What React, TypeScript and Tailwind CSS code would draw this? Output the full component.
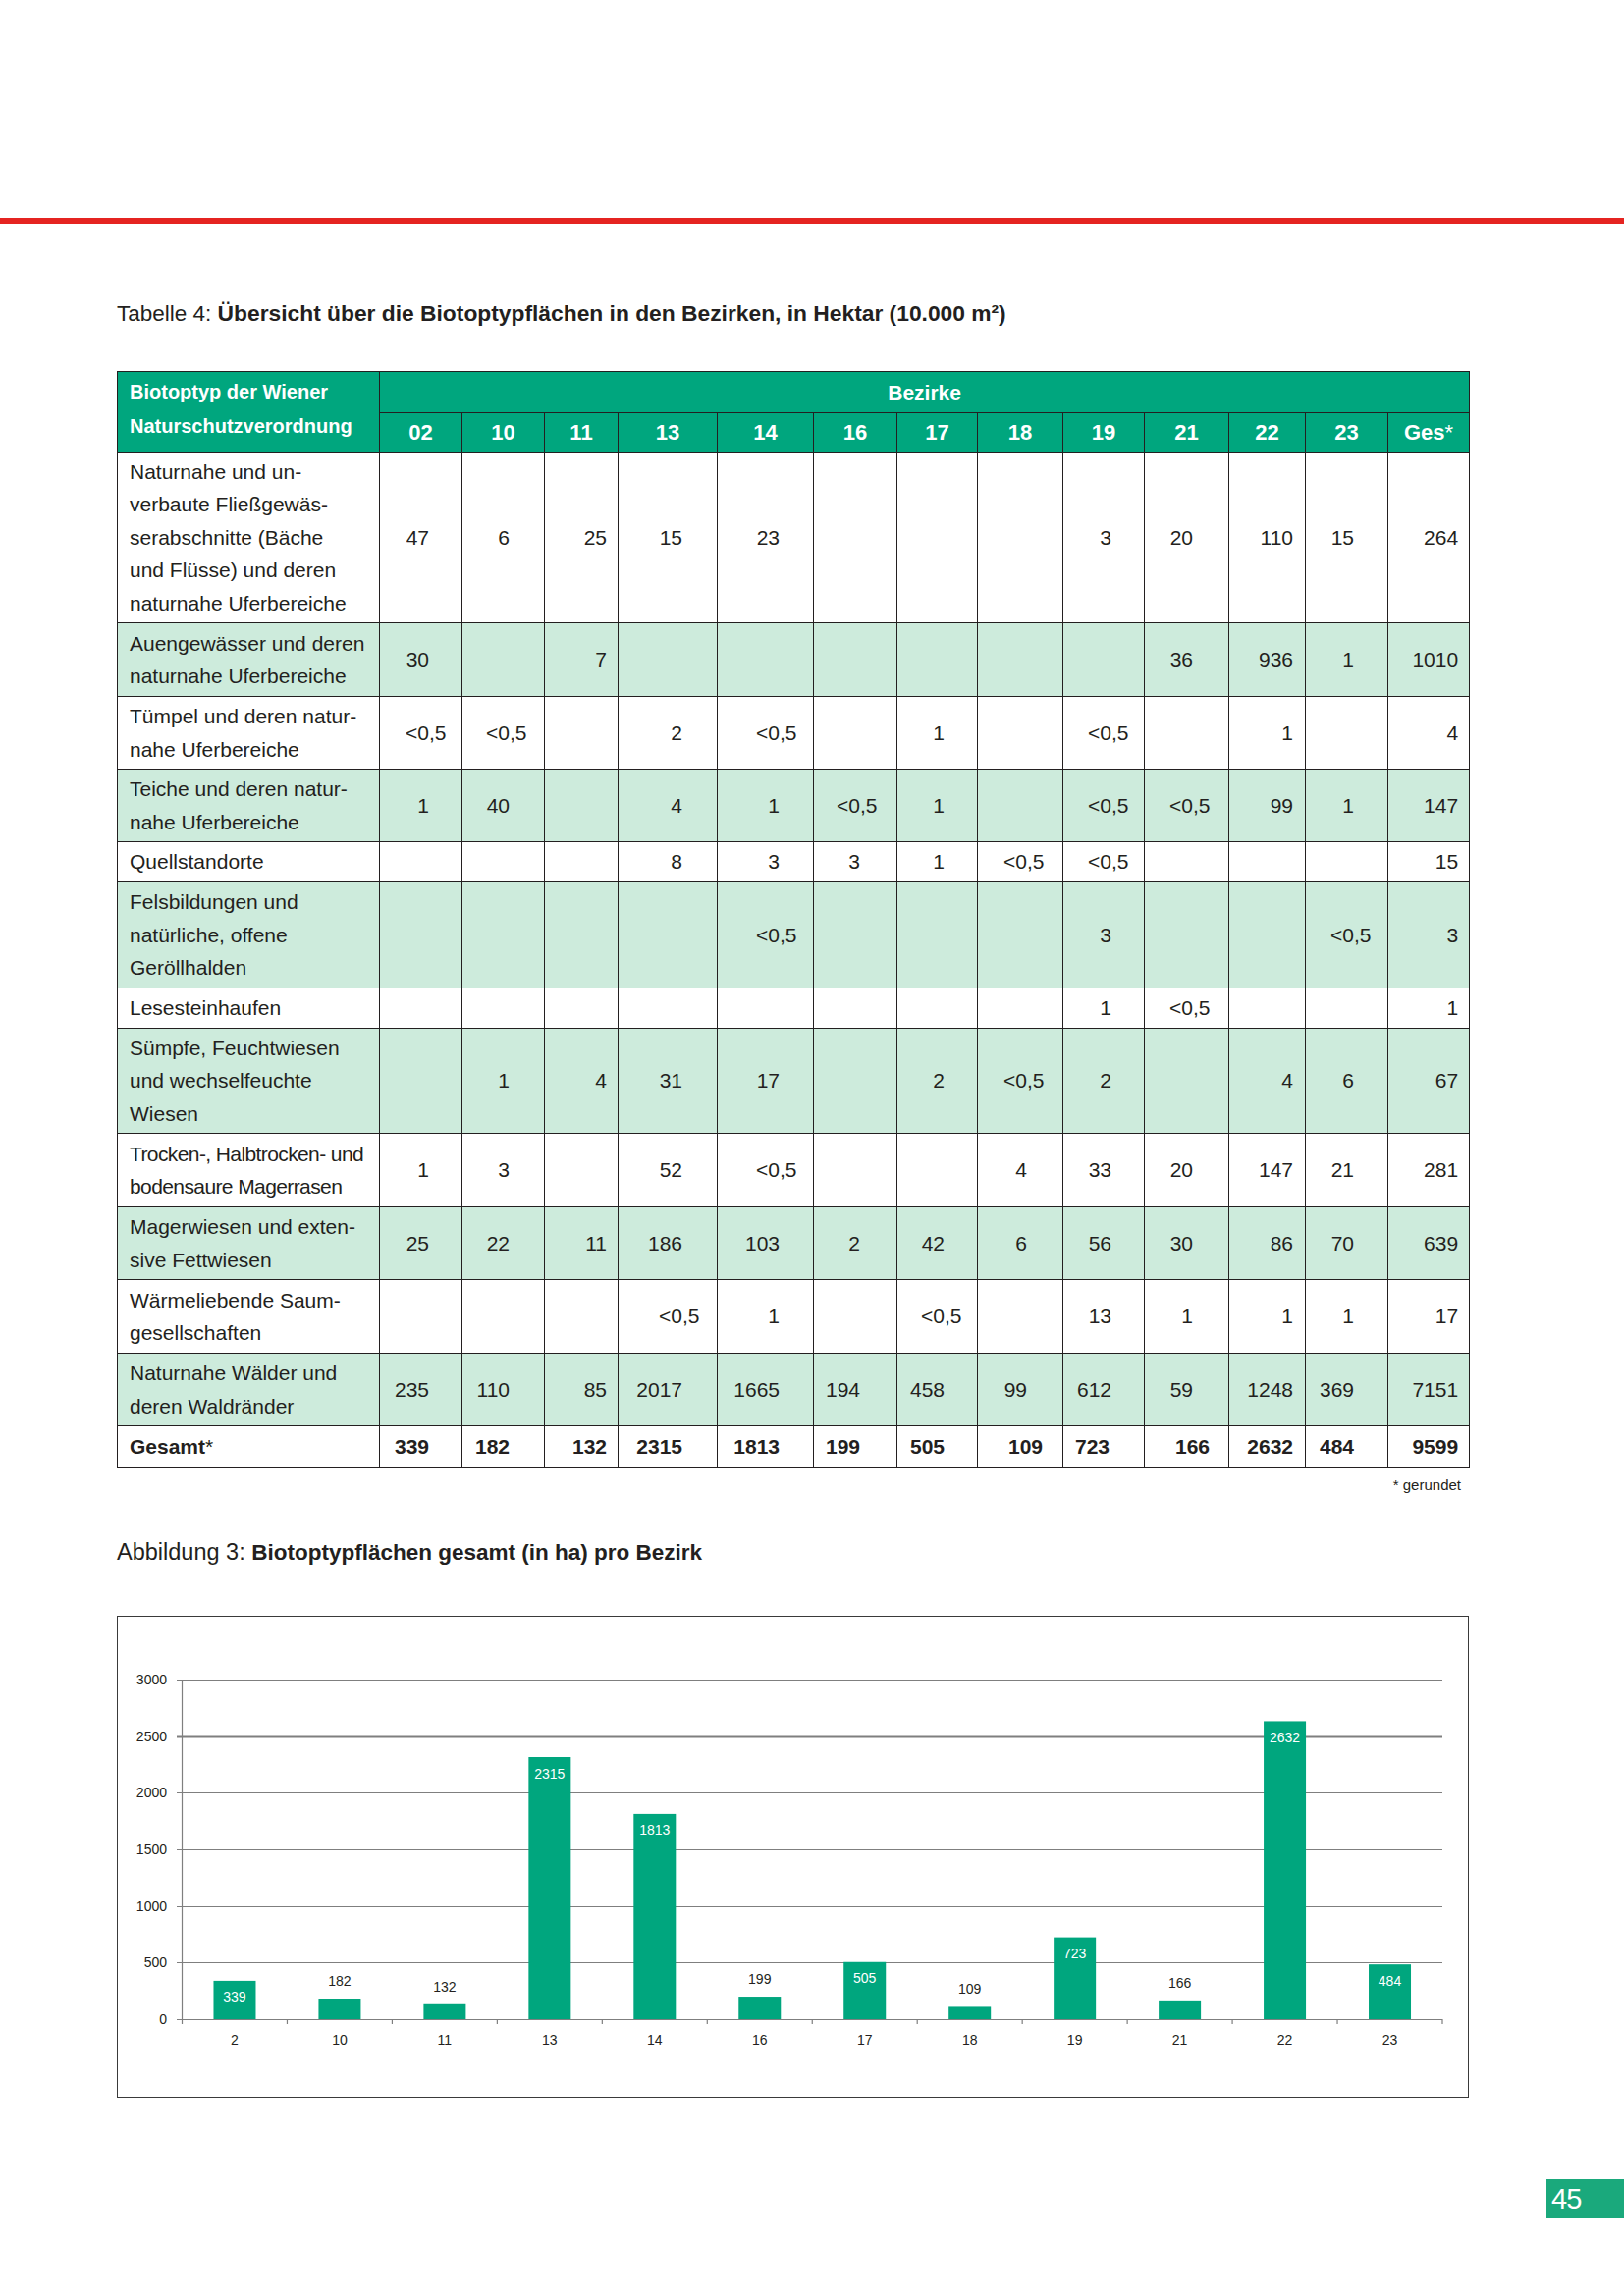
import React from "react";

const cols = ["02", "10", "11", "13", "14", "16", "17", "18", "19", "21", "22", "23", "Ges"];
const colW = [
  "w-[267px]",
  "w-[84px]",
  "w-[84px]",
  "w-[75px]",
  "w-[101px]",
  "w-[98px]",
  "w-[85px]",
  "w-[82px]",
  "w-[87px]",
  "w-[83px]",
  "w-[86px]",
  "w-[78px]",
  "w-[84px]",
  "w-[83px]",
];
const prCls = [
  "pr-[33px]",
  "pr-[35px]",
  "pr-[11px]",
  "pr-[35px]",
  "pr-[34px]",
  "pr-[37px]",
  "pr-[33px]",
  "pr-[36px]",
  "pr-[33px]",
  "pr-[36px]",
  "pr-[12px]",
  "pr-[34px]",
  "pr-[11px]",
];
const prTotal = [
  "pr-[33px]",
  "pr-[35px]",
  "pr-[11px]",
  "pr-[35px]",
  "pr-[34px]",
  "pr-[37px]",
  "pr-[33px]",
  "pr-[20px]",
  "pr-[35px]",
  "pr-[19px]",
  "pr-[12px]",
  "pr-[34px]",
  "pr-[11px]",
];

type Row = { label: string[]; vals: string[]; green: boolean; h: string; tight?: boolean };

const L = "<0,5";
const rows: Row[] = [
  {
    label: ["Naturnahe und un-", "verbaute Fließgewäs-", "serabschnitte (Bäche", "und Flüsse) und deren", "naturnahe Uferbereiche"],
    vals: ["47", "6", "25", "15", "23", "", "", "", "3", "20", "110", "15", "264"],
    green: false,
    h: "h-[174px]",
  },
  {
    label: ["Auengewässer und deren", "naturnahe Uferbereiche"],
    vals: ["30", "", "7", "", "", "", "", "", "", "36", "936", "1", "1010"],
    green: true,
    h: "h-[75px]",
  },
  {
    label: ["Tümpel und deren natur-", "nahe Uferbereiche"],
    vals: [L, L, "", "2", L, "", "1", "", L, "", "1", "", "4"],
    green: false,
    h: "h-[74px]",
  },
  {
    label: ["Teiche und deren natur-", "nahe Uferbereiche"],
    vals: ["1", "40", "", "4", "1", L, "1", "", L, L, "99", "1", "147"],
    green: true,
    h: "h-[74px]",
  },
  {
    label: ["Quellstandorte"],
    vals: ["", "", "", "8", "3", "3", "1", L, L, "", "", "", "15"],
    green: false,
    h: "h-[41px]",
  },
  {
    label: ["Felsbildungen und", "natürliche, offene", "Geröllhalden"],
    vals: ["", "", "", "", L, "", "", "", "3", "", "", L, "3"],
    green: true,
    h: "h-[108px]",
  },
  {
    label: ["Lesesteinhaufen"],
    vals: ["", "", "", "", "", "", "", "", "1", L, "", "", "1"],
    green: false,
    h: "h-[41px]",
  },
  {
    label: ["Sümpfe, Feuchtwiesen", "und wechselfeuchte", "Wiesen"],
    vals: ["", "1", "4", "31", "17", "", "2", L, "2", "", "4", "6", "67"],
    green: true,
    h: "h-[107px]",
  },
  {
    label: ["Trocken-, Halbtrocken- und", "bodensaure Magerrasen"],
    vals: ["1", "3", "", "52", L, "", "", "4", "33", "20", "147", "21", "281"],
    green: false,
    h: "h-[75px]",
    tight: true,
  },
  {
    label: ["Magerwiesen und exten-", "sive Fettwiesen"],
    vals: ["25", "22", "11", "186", "103", "2", "42", "6", "56", "30", "86", "70", "639"],
    green: true,
    h: "h-[74px]",
  },
  {
    label: ["Wärmeliebende Saum-", "gesellschaften"],
    vals: ["", "", "", L, "1", "", L, "", "13", "1", "1", "1", "17"],
    green: false,
    h: "h-[75px]",
  },
  {
    label: ["Naturnahe Wälder und", "deren Waldränder"],
    vals: ["235", "110", "85", "2017", "1665", "194", "458", "99", "612", "59", "1248", "369", "7151"],
    green: true,
    h: "h-[74px]",
  },
];

const totals = ["339", "182", "132", "2315", "1813", "199", "505", "109", "723", "166", "2632", "484", "9599"];

function Val({ v }: { v: string }) {
  if (v.startsWith("<")) return <span className="-mr-[17.5px]">{v}</span>;
  return <>{v}</>;
}

const bd = "border border-[#231f20]";

function Table() {
  return (
    <table className="border-collapse table-fixed w-[1377px] text-[#231f20]">
      <colgroup>
        {colW.map((w, i) => (
          <col key={i} className={w} />
        ))}
      </colgroup>
      <tbody>
        <tr className="h-[42px]">
          <td
            rowSpan={2}
            className={`${bd} bg-[#00a67e] text-white font-bold text-[20px] leading-[35px] pt-[3px] pl-[12px] align-top whitespace-nowrap`}
          >
            Biotoptyp der Wiener
            <br />
            Naturschutzverordnung
          </td>
          <td colSpan={13} className={`${bd} bg-[#00a67e] text-white font-bold text-[21px] text-center align-middle`}>
            Bezirke
          </td>
        </tr>
        <tr className="h-[40px]">
          {cols.map((c) => (
            <td key={c} className={`${bd} bg-[#00a67e] text-white font-bold text-[22px] text-center align-middle`}>
              {c === "Ges" ? (
                <>
                  Ges<span className="font-normal">*</span>
                </>
              ) : (
                c
              )}
            </td>
          ))}
        </tr>
        {rows.map((r, ri) => (
          <tr key={ri} className={`${r.h} ${r.green ? "bg-[#cdebdc]" : "bg-white"}`}>
            <td
              className={`${bd} pl-[12px] text-left align-middle text-[21px] leading-[33.4px] whitespace-nowrap ${
                r.tight ? "tracking-[-0.6px]" : "tracking-normal"
              }`}
            >
              {r.label.map((l, li) => (
                <div key={li}>{l}</div>
              ))}
            </td>
            {r.vals.map((v, vi) => (
              <td key={vi} className={`${bd} ${prCls[vi]} text-right align-middle text-[21px] whitespace-nowrap`}>
                <Val v={v} />
              </td>
            ))}
          </tr>
        ))}
        <tr className="h-[42px] bg-white">
          <td className={`${bd} pl-[12px] text-left align-middle text-[21px] font-bold whitespace-nowrap`}>
            Gesamt<span className="font-normal">*</span>
          </td>
          {totals.map((v, vi) => (
            <td key={vi} className={`${bd} ${prTotal[vi]} text-right align-middle text-[21px] font-bold whitespace-nowrap`}>
              {v}
            </td>
          ))}
        </tr>
      </tbody>
    </table>
  );
}

const data = [
  { k: "2", v: 339, inside: true },
  { k: "10", v: 182, inside: false },
  { k: "11", v: 132, inside: false },
  { k: "13", v: 2315, inside: true },
  { k: "14", v: 1813, inside: true },
  { k: "16", v: 199, inside: false },
  { k: "17", v: 505, inside: true },
  { k: "18", v: 109, inside: false },
  { k: "19", v: 723, inside: true },
  { k: "21", v: 166, inside: false },
  { k: "22", v: 2632, inside: true },
  { k: "23", v: 484, inside: true },
];

function Chart() {
  const axisX = 65.5;
  const right = 1349;
  const y0 = 410;
  const scale = 346 / 3000;
  const catW = (right - axisX) / 12;
  const barW = 43;
  const grid = [500, 1000, 1500, 2000, 2500, 3000];
  return (
    <svg width={1375} height={489} viewBox="0 0 1375 489" className="block" fontFamily="'Liberation Sans', Arial, sans-serif">
      {grid.map((g) => {
        const y = Math.round(y0 - g * scale) + 0.5;
        return (
          <line key={g} x1={60} x2={right} y1={y} y2={y} stroke="#7f7f7f" strokeWidth={g === 2500 ? 2 : 1.2} />
        );
      })}
      {[0, ...grid].map((g) => {
        const y = y0 - g * scale;
        return (
          <text key={"t" + g} x={50} y={y + 5} textAnchor="end" fontSize={14} fill="#231f20">
            {g}
          </text>
        );
      })}
      <line x1={axisX} x2={axisX} y1={y0 - 3000 * scale} y2={y0} stroke="#7f7f7f" strokeWidth={1.2} />
      {Array.from({ length: 13 }).map((_, k) => {
        const x = axisX + catW * k;
        return <line key={"tk" + k} x1={x} x2={x} y1={y0} y2={y0 + 5} stroke="#7f7f7f" strokeWidth={1.2} />;
      })}
      {data.map((d, i) => {
        const cx = axisX + catW * (i + 0.5);
        const h = d.v * scale;
        const top = y0 - h;
        return (
          <g key={d.k}>
            <rect x={cx - barW / 2} y={top} width={barW} height={h} fill="#00a67e" />
            <text
              x={cx}
              y={d.inside ? top + 21.5 : top - 13}
              textAnchor="middle"
              fontSize={14}
              fill={d.inside ? "#ffffff" : "#231f20"}
            >
              {d.v}
            </text>
            <text x={cx} y={435.5} textAnchor="middle" fontSize={14} fill="#231f20">
              {d.k}
            </text>
          </g>
        );
      })}
      <line x1={60} x2={right} y1={y0 + 0.5} y2={y0 + 0.5} stroke="#7f7f7f" strokeWidth={1.2} />
    </svg>
  );
}

export default function App() {
  return (
    <div className="w-[1654px] h-[2339px] bg-white overflow-hidden font-['Liberation_Sans',Arial,sans-serif] text-[#231f20]">
      <div className="pt-[222px]">
        <div className="h-[6px] bg-[#e52421]" />
      </div>
      <div className="pl-[119px] pr-[158px]">
        <div className="mt-[77px] h-[28px] leading-[28px] whitespace-nowrap">
          <span className="text-[22.5px]">Tabelle 4: </span>
          <span className="text-[22.8px] font-bold">Übersicht über die Biotoptypflächen in den Bezirken, in Hektar (10.000 m²)</span>
        </div>
        <div className="mt-[45px]">
          <Table />
        </div>
        <div className="mt-[10px] h-[16px] text-right pr-[8px] text-[15px] leading-[16px]">* gerundet</div>
        <div className="mt-[46px] h-[28px] leading-[28px] whitespace-nowrap">
          <span className="text-[23.5px]">Abbildung 3: </span>
          <span className="text-[22.5px] font-bold">Biotoptypflächen gesamt (in ha) pro Bezirk</span>
        </div>
        <div className="mt-[51px] w-[1377px] h-[491px] border border-[#3a3a3a]">
          <Chart />
        </div>
      </div>
      <div className="mt-[83px] flex justify-end">
        <div className="w-[79px] h-[40px] bg-[#1aa97c] text-white text-[29px] leading-[40px] pl-[5px] tracking-[-1px]">45</div>
      </div>
    </div>
  );
}
